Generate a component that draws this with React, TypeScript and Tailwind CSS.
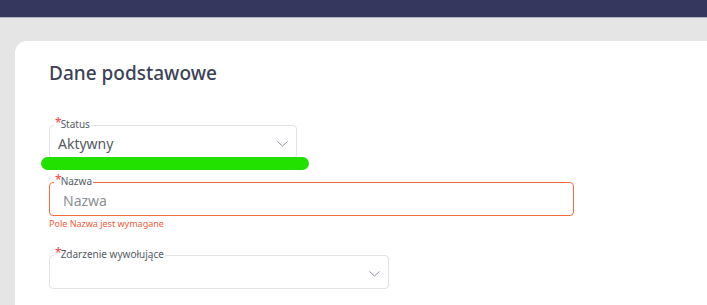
import { ReactNode } from 'react'

function Chevron() {
  return (
    <svg width="11" height="6" viewBox="0 0 11 6" fill="none" className="shrink-0 mt-[3px]">
      <path d="M0.5 0.5L5.5 5L10.5 0.5" stroke="#8c93a8" strokeWidth="1" />
    </svg>
  )
}

function Field({
  label,
  width,
  error,
  select,
  children,
  overlay,
}: {
  label?: string
  width: string
  error?: boolean
  select?: boolean
  children?: ReactNode
  overlay?: ReactNode
}) {
  return (
    <div className={`relative ${width}`}>
      <div
        className={`flex items-center justify-between h-[34px] pl-[8px] pr-[8px] rounded-[4px] border ${
          error ? 'border-[#f26a3d]' : 'border-[#e3e3e3]'
        }`}
      >
        <div className="text-[14px] leading-none pt-[3px]">{children}</div>
        {select && <Chevron />}
      </div>
      {/* floating label on the border */}
      <div className="absolute left-[5px] -top-[8px] flex items-start bg-white pl-[1px] pr-[1px] leading-none">
        <span className="text-[12px] leading-[12px] text-[#ff3b3b] -mr-[1px]">*</span>
        {label && <span className="text-[10px] leading-[15px] text-[#555b66]">{label}</span>}
      </div>
      {overlay}
    </div>
  )
}

export default function App() {
  return (
    <div className="w-[707px] h-[305px] overflow-hidden bg-[#e5e5e5] font-['Noto_Sans',sans-serif]">
      {/* Top bar */}
      <div className="h-[18px] bg-[#35375e] border-b border-[#aeb2c6]" />

      <div className="pl-[15px] pt-[23px]">
        <div className="bg-white rounded-tl-[12px] h-[300px] pl-[34px] pt-[20px]">
          <h2 className="text-[19px] leading-[25px] font-medium text-[#3b4256]">Dane podstawowe</h2>

          <div className="mt-[39px] flex flex-col">
            <Field
              label="Status"
              width="w-[248px]"
              select
              overlay={
                <div className="absolute -left-[8px] top-[32px] w-[268px] h-[13px] rounded-full bg-[#22e100]" />
              }
            >
              <span className="text-[#555a62]">Aktywny</span>
            </Field>

            <div className="mt-[23px]">
              <Field label="Nazwa" width="w-[525px]" error>
                <span className="text-[#8c8f94] pl-[5px]">Nazwa</span>
              </Field>
              <p className="mt-[2px] text-[9px] leading-[12px] text-[#f0603a]">Pole Nazwa jest wymagane</p>
            </div>

            <div className="mt-[25px]">
              <Field label="Zdarzenie wywołujące" width="w-[340px]" select />
            </div>

            <div className="mt-[24px]">
              <Field width="w-[340px]" select />
            </div>
          </div>
        </div>
      </div>
    </div>
  )
}
